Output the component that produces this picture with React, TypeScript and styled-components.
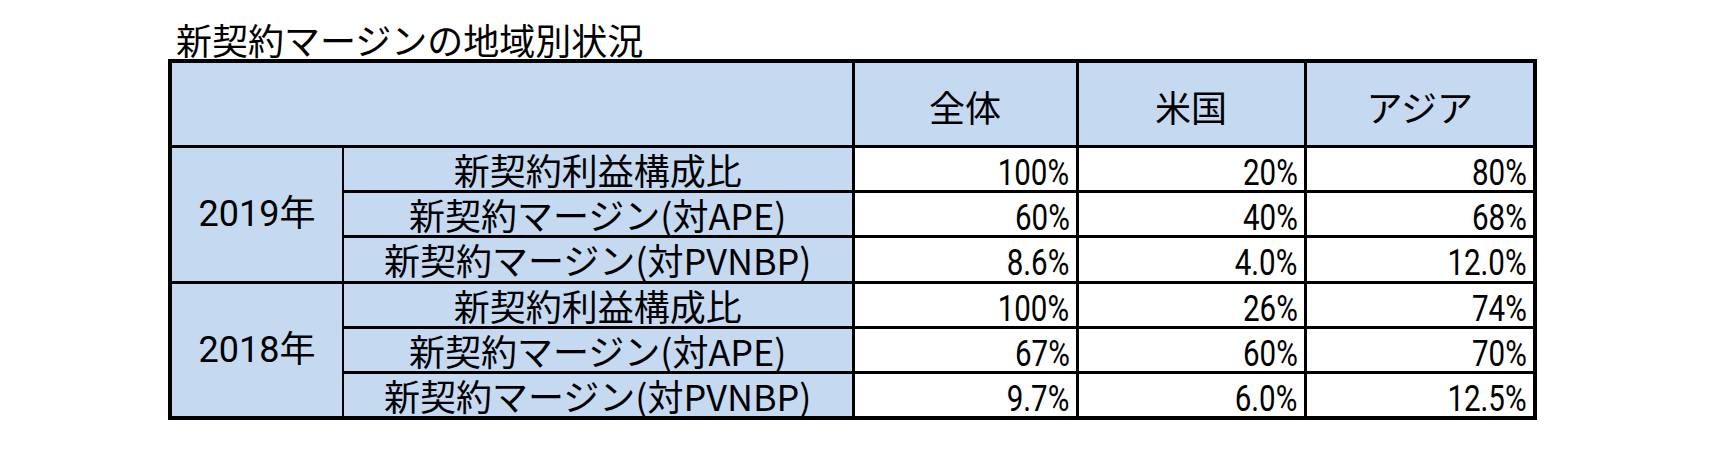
import React from 'react';
import styled, { createGlobalStyle } from 'styled-components';

// --- Estilos globais ---
const GlobalStyle = createGlobalStyle`
    html, body {
        margin: 0;
        padding: 0;
        background: #ffffff;
    }
    body {
        font-family: "Noto Sans CJK JP", "Noto Sans", sans-serif;
        color: #000000;
    }
`;

const BLUE = '#c5d9f1';

const Page = styled.div`
    padding: 20px 0 0 168px;
    width: 1365px;
`;

const Title = styled.div`
    font-family: "Noto Sans CJK JP", sans-serif;
    font-size: 36px;
    line-height: 39px;
    padding-left: 8px;
    white-space: nowrap;
`;

const Table = styled.table`
    width: 1365px;
    border-collapse: collapse;
    table-layout: fixed;
    border: 4px solid #000;
`;

const HeadRow = styled.tr`
    height: 85px;
`;

const BodyRow = styled.tr`
    height: 45.4px;
`;

const Cell = styled.td`
    border: 3.5px solid #000;
    padding: 0;
    font-size: 36px;
    line-height: 38px;
    white-space: nowrap;
`;

const HeadCell = styled(Cell)`
    background: ${BLUE};
    text-align: center;
    vertical-align: middle;
    padding-top: 4px;
`;

const YearCell = styled(Cell)`
    background: ${BLUE};
    text-align: center;
    border-right-width: 2.5px;
    font-family: Roboto, "Noto Sans CJK JP", sans-serif;
`;

const LabelCell = styled(Cell)`
    background: ${BLUE};
    text-align: center;
    border-left-width: 2.5px;
`;

const ValueCell = styled(Cell)`
    background: #ffffff;
    text-align: right;
    padding-right: 6px;
`;

const Num = styled.span`
    display: inline-block;
    font-family: Roboto, "Liberation Sans", sans-serif;
    transform: scaleX(0.82) translateY(2px);
    transform-origin: right center;
`;

// --- Dados ---
interface Row {
    label: string;
    values: [string, string, string];
}

const regions = ['全体', '米国', 'アジア'];

const years: { year: string; rows: Row[] }[] = [
    {
        year: '2019年',
        rows: [
            { label: '新契約利益構成比', values: ['100%', '20%', '80%'] },
            { label: '新契約マージン(対APE)', values: ['60%', '40%', '68%'] },
            { label: '新契約マージン(対PVNBP)', values: ['8.6%', '4.0%', '12.0%'] },
        ],
    },
    {
        year: '2018年',
        rows: [
            { label: '新契約利益構成比', values: ['100%', '26%', '74%'] },
            { label: '新契約マージン(対APE)', values: ['67%', '60%', '70%'] },
            { label: '新契約マージン(対PVNBP)', values: ['9.7%', '6.0%', '12.5%'] },
        ],
    },
];

// --- Componente ---
const App: React.FC = () => {
    return (
        <>
            <GlobalStyle />
            <Page>
                <Title>新契約マージンの地域別状況</Title>
                <Table>
                    <colgroup>
                        <col style={{ width: 173 }} />
                        <col style={{ width: 510 }} />
                        <col style={{ width: 224 }} />
                        <col style={{ width: 228 }} />
                        <col style={{ width: 230 }} />
                    </colgroup>
                    <tbody>
                        <HeadRow>
                            <HeadCell colSpan={2} />
                            {regions.map((r) => (
                                <HeadCell key={r}>{r}</HeadCell>
                            ))}
                        </HeadRow>
                        {years.map((y) =>
                            y.rows.map((row, i) => (
                                <BodyRow key={y.year + i}>
                                    {i === 0 && <YearCell rowSpan={3}>{y.year}</YearCell>}
                                    <LabelCell>{row.label}</LabelCell>
                                    {row.values.map((v, j) => (
                                        <ValueCell key={j}>
                                            <Num>{v}</Num>
                                        </ValueCell>
                                    ))}
                                </BodyRow>
                            ))
                        )}
                    </tbody>
                </Table>
            </Page>
        </>
    );
};

export default App;
